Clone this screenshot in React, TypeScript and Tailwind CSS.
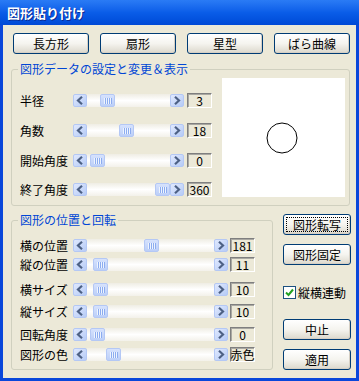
import React from "react";

type Row = { label: string; thumb: number; value: string; mt: string };

const shapeRows: Row[] = [
  { label: "半径", thumb: 13, value: "3", mt: "mt-[17px]" },
  { label: "角数", thumb: 32, value: "18", mt: "mt-[15px]" },
  { label: "開始角度", thumb: 3, value: "0", mt: "mt-[15px]" },
  { label: "終了角度", thumb: 68, value: "360", mt: "mt-[14px]" },
];

const posRows: Row[] = [
  { label: "横の位置", thumb: 57, value: "181", mt: "mt-[11px]" },
  { label: "縦の位置", thumb: 6, value: "11", mt: "mt-[4px]" },
  { label: "横サイズ", thumb: 6, value: "10", mt: "mt-[10px]" },
  { label: "縦サイズ", thumb: 6, value: "10", mt: "mt-[7px]" },
  { label: "回転角度", thumb: 3, value: "0", mt: "mt-[8px]" },
  { label: "図形の色", thumb: 19, value: "赤色", mt: "mt-[5px]" },
];

const XpButton = ({ label, focused }: { label: string; focused?: boolean }) => (
  <button className="flex h-[21px] w-full items-center justify-center rounded-[3px] border border-[#003C74] bg-linear-to-b from-white via-[#F5F4EF] to-[#DCD8CC] p-[2px] text-[12px] leading-none text-black shadow-[inset_-1px_-1px_0_#D6D0C5]">
    <span
      className={
        focused
          ? "flex h-full w-full items-center justify-center border border-dotted border-black"
          : "flex h-full w-full items-center justify-center"
      }
    >
      {label}
    </span>
  </button>
);

const Arrow = ({ left }: { left?: boolean }) => (
  <div className="flex h-[13px] w-[14px] shrink-0 items-center justify-center rounded-[2px] border border-[#B4C8F5] bg-linear-to-br from-[#E0E9FE] to-[#B6CBF6]">
    <svg width="8" height="9" viewBox="0 0 8 9">
      <path
        d={left ? "M6 0.8 L2 4.5 L6 8.2" : "M2 0.8 L6 4.5 L2 8.2"}
        stroke="#4D6185"
        strokeWidth="2.2"
        fill="none"
      />
    </svg>
  </div>
);

const ScrollBar = ({ thumb, wide }: { thumb: number; wide?: boolean }) => (
  <div className={wide ? "flex h-[13px] w-[155px]" : "flex h-[13px] w-[111px]"}>
    <Arrow left />
    <div className="flex flex-1 bg-linear-to-b from-[#EFEDE4] via-white to-[#F3F1EA]">
      <div
        className="flex h-[13px] w-[15px] items-center justify-center rounded-[2px] border border-[#B4C8F5] bg-linear-to-b from-[#D6E2FD] to-[#BCCFF8]"
        style={{ marginLeft: thumb }}
      >
        {[0, 1, 2, 3].map((i) => (
          <span key={i} className="flex h-[6px]">
            <span className="w-px bg-[#EEF4FE]" />
            <span className="w-px bg-[#8CACF0]" />
          </span>
        ))}
      </div>
    </div>
    <Arrow />
  </div>
);

const ValueBox = ({ value }: { value: string }) => (
  <div className="flex h-[15px] w-[25px] items-center justify-center border border-t-[#7F7F7F] border-l-[#7F7F7F] border-r-white border-b-white bg-[#ECE9D8] text-[12px] leading-none whitespace-nowrap text-black shadow-[inset_1px_1px_0_#A9A8A2]">
    {value}
  </div>
);

const SliderRow = ({ row, wide }: { row: Row; wide?: boolean }) => (
  <div className={`flex h-[15px] items-center ${row.mt}`}>
    <span className="w-[53px] text-[12px] leading-none text-black">{row.label}</span>
    <ScrollBar thumb={row.thumb} wide={wide} />
    <div className={wide ? "ml-[2px]" : "ml-[3px]"}>
      <ValueBox value={row.value} />
    </div>
  </div>
);

export default function App() {
  return (
    <div className="flex h-[381px] w-[359px] flex-col overflow-hidden font-['Noto_Sans_CJK_JP','Noto_Sans',sans-serif]">
      {/* title bar */}
      <div className="flex h-[25px] shrink-0 items-center bg-linear-to-b from-[#2A7BF5] via-[#0A5DE8] to-[#0049D6] pl-[7px] text-[13px] leading-none font-bold text-white [text-shadow:1px_1px_0_#0B2C93]">
        図形貼り付け
      </div>

      <div className="flex-1 border-x-[3px] border-b-[3px] border-[#0A47DA] bg-[#ECE9D8] pt-[8px] pl-[8px]">
        {/* shape buttons */}
        <div className="ml-[2px] flex gap-[11px]">
          {["長方形", "扇形", "星型", "ばら曲線"].map((b) => (
            <div key={b} className="w-[76px]">
              <XpButton label={b} />
            </div>
          ))}
        </div>

        {/* shape data group */}
        <fieldset className="mt-[8px] h-[144px] w-[339px] rounded-[3px] border border-[#D0D0BF]">
          <legend className="ml-[6px] px-[2px] text-[12px] leading-[14px] text-[#0046D5]">
            図形データの設定と変更＆表示
          </legend>
          <div className="flex pl-[8px]">
            <div className="flex w-[192px] flex-col">
              {shapeRows.map((r) => (
                <SliderRow key={r.label} row={r} />
              ))}
            </div>
            <div className="mt-[2px] ml-[10px] h-[119px] w-[123px] bg-white">
              <svg width="123" height="119" viewBox="0 0 123 119">
                <circle cx="60" cy="60" r="15" stroke="black" strokeWidth="1" fill="none" />
              </svg>
            </div>
          </div>
        </fieldset>

        {/* position group + side buttons */}
        <div className="mt-[7px] flex">
          <fieldset className="h-[157px] w-[262px] rounded-[3px] border border-[#D0D0BF]">
            <legend className="ml-[6px] px-[2px] text-[12px] leading-[14px] text-[#0046D5]">
              図形の位置と回転
            </legend>
            <div className="flex flex-col pl-[8px]">
              {posRows.map((r) => (
                <SliderRow key={r.label} row={r} wide />
              ))}
            </div>
          </fieldset>

          <div className="ml-[10px] flex w-[68px] flex-col">
            <div className="mt-[1px]">
              <XpButton label="図形転写" focused />
            </div>
            <div className="mt-[9px]">
              <XpButton label="図形固定" />
            </div>
            <div className="mt-[21px] flex h-[13px] items-center">
              <div className="flex h-[13px] w-[13px] items-center justify-center border border-[#1C5180] bg-white">
                <svg width="9" height="9" viewBox="0 0 9 9">
                  <path d="M1 4.5 L3.5 7 L8 1.5" stroke="#21A121" strokeWidth="2" fill="none" />
                </svg>
              </div>
              <span className="ml-[2px] text-[12px] leading-none text-black">縦横連動</span>
            </div>
            <div className="mt-[20px]">
              <XpButton label="中止" />
            </div>
            <div className="mt-[9px]">
              <XpButton label="適用" />
            </div>
          </div>
        </div>
      </div>
    </div>
  );
}
